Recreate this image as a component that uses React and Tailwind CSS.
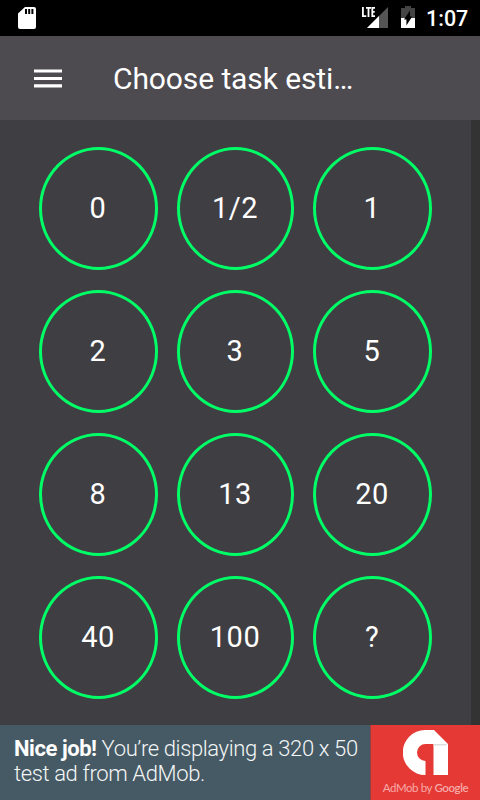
const rows = [
  ["0", "1/2", "1"],
  ["2", "3", "5"],
  ["8", "13", "20"],
  ["40", "100", "?"],
];

function StatusBar() {
  return (
    <div className="flex h-9 shrink-0 items-start bg-black">
      <svg className="ml-[18px] mt-[7px] h-[22px] w-[18px]" viewBox="0 0 18 22">
        <path fill="#fff" fillRule="evenodd" d="M7 0H16Q18 0 18 2V20Q18 22 16 22H2Q0 22 0 20V6.5ZM7 2V7H9V2ZM10.2 2V7H12.2V2ZM13.4 2V7H15.4V2Z" />
      </svg>
      <div className="flex-1" />
      <svg className="h-9 w-[60px] shrink-0" viewBox="360 0 60 36">
        <path fill="#555" d="M388 7V28H367Z" />
        <path fill="#000" d="M360 5H376V18H360Z" />
        <path fill="#fff" d="M379 16V28H367L377 18Z" />
        <path fill="none" stroke="#fff" strokeWidth="1.8" d="M362.900 7V16.100H366.300M366 7.900H371M368.500 7.900V17M375 7.900H372.300V16.100H375M372.300 11.900H374.700" />
        <path fill="#444" d="M405 6H411V8H415V18H401V8H405Z" />
        <path fill="#fff" d="M401 18H415V28H401Z" />
        <path fill="#000" d="M410 10.500V16.500H412.200L406.400 25.500V19.500H404Z" />
      </svg>
      <span className="w-[60px] mt-[4px] whitespace-nowrap pl-[6px] text-[21.5px] font-medium leading-[30px] text-white">1:07</span>
    </div>
  );
}

function AdBanner() {
  return (
    <div className="flex h-[75px] shrink-0 bg-[#455a64]">
      <p className="w-[370px] whitespace-nowrap pl-[14px] pt-[11px] text-[22px] font-light leading-[25px] tracking-[-0.37px] text-[#f4f6f7]">
        <span className="font-bold tracking-[-0.45px] text-white">Nice job!</span> You’re displaying a 320 x 50
        <br />
        test ad from AdMob.
      </p>
      <div className="flex flex-1 flex-col items-center border-l border-[#943f45] bg-[#e53935]">
        <svg className="mt-[5px] h-[45px] w-[45px]" viewBox="0 0 45 45">
          <path fill="#fff" d="M22 0H31L45 14V45H30.500V14H22.500A8.500 8.500 0 0 0 22.500 31V45A22.500 22.500 0 0 1 22 0Z" />
          <path fill="#ddd" d="M30.500 14H44.500L43 15.500H30.500Z" />
        </svg>
        <p className="mt-[5px] whitespace-nowrap font-['Lato'] text-[11.5px] leading-[16px] tracking-[-0.4px] text-[#f5aaa8]">
          AdMob by <span className="font-semibold">Google</span>
        </p>
      </div>
    </div>
  );
}

export default function App() {
  return (
    <div className="flex h-[800px] w-[480px] flex-col overflow-hidden bg-[#3f3e43] font-['Roboto',sans-serif]">
      <StatusBar />
      <header className="flex h-[84px] shrink-0 items-center bg-[#4d4a50] pl-[34px]">
        <svg className="h-[20px] w-[28px]" viewBox="0 0 28 20">
          <path fill="#fff" d="M0 1.400H28V4.600H0ZM0 9H28V12H0ZM0 16.300H28V19.500H0Z" />
        </svg>
        <h1 className="ml-[51px] pt-[2px] text-[30px] leading-[40px] tracking-[-0.1px] text-white">Choose task esti…</h1>
      </header>
      <main className="flex flex-1">
        <div className="flex w-[471px] flex-col gap-[20px] pl-[39px] pt-[27px]">
          {rows.map((row) => (
            <div key={row[0]} className="grid grid-cols-[119px_117px_119px] gap-[19px]">
              {row.map((value) => (
                <button
                  key={value}
                  className="flex h-[123px] items-center justify-center rounded-[50%] border-[3px] border-[#00ff66] pr-[1px] pb-[2px] text-[29px] leading-[34px] tracking-[0.5px] text-white"
                >
                  {value}
                </button>
              ))}
            </div>
          ))}
        </div>
        <div className="flex-1 bg-[#333333]" />
      </main>
      <AdBanner />
    </div>
  );
}
